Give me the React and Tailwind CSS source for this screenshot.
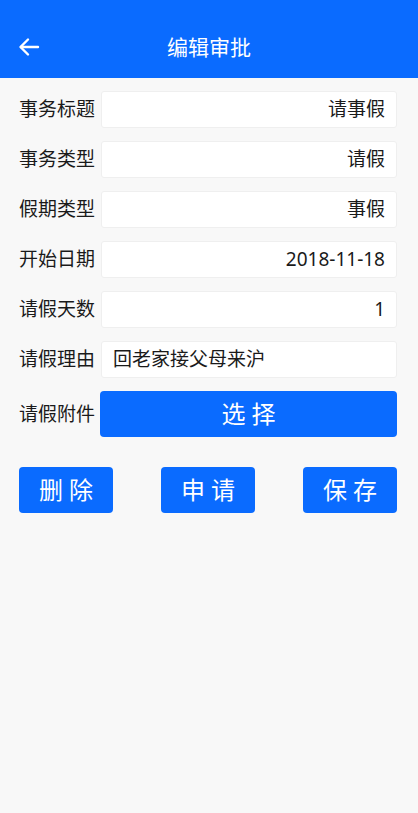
import React from "react";

const rows = [
  { label: "事务标题", value: "请事假", align: "right" },
  { label: "事务类型", value: "请假", align: "right" },
  { label: "假期类型", value: "事假", align: "right" },
  { label: "开始日期", value: "2018-11-18", align: "right" },
  { label: "请假天数", value: "1", align: "right" },
  { label: "请假理由", value: "回老家接父母来沪", align: "left" },
];

export default function App() {
  return (
    <div
      className="min-h-[813px] w-[418px] bg-[#f8f8f8] text-[#1a1a1a]"
      style={{ fontFamily: '"Noto Sans", "Noto Sans CJK SC", sans-serif' }}
    >
      <div className="relative flex h-[78px] items-center justify-center bg-[#0a6bff] pt-[16px]">
        <svg
          className="absolute left-[18px] top-[37px]"
          width="22"
          height="20"
          viewBox="0 0 22 20"
          fill="none"
          stroke="white"
          strokeWidth="2.4"
          strokeLinecap="round"
          strokeLinejoin="round"
        >
          <path d="M20 10H3" />
          <path d="M10 2.5L2.5 10L10 17.5" />
        </svg>
        <span className="text-[21px] leading-none text-white">编辑审批</span>
      </div>

      <div className="flex flex-col gap-[13px] pl-[19px] pr-[21px] pt-[13px]">
        {rows.map((r) => (
          <div key={r.label} className="flex items-center">
            <div className="w-[82px] shrink-0 text-[19px] leading-none">{r.label}</div>
            <div
              className={`flex h-[37px] flex-1 items-center rounded-[3px] border border-[#efefef] bg-white px-[11px] text-[19px] leading-none ${
                r.align === "right" ? "justify-end" : "justify-start"
              }`}
            >
              {r.value}
            </div>
          </div>
        ))}
        <div className="flex items-center">
          <div className="w-[81px] shrink-0 text-[19px] leading-none">请假附件</div>
          <button className="flex h-[46px] flex-1 items-center justify-center rounded-[4px] bg-[#0a6bff] text-[24px] leading-none text-white">
            选 择
          </button>
        </div>
      </div>

      <div className="mt-[30px] flex justify-between pl-[19px] pr-[21px]">
        {["删 除", "申 请", "保 存"].map((t) => (
          <button
            key={t}
            className="flex h-[46px] w-[94px] items-center justify-center rounded-[4px] bg-[#0a6bff] text-[24px] leading-none text-white"
          >
            {t}
          </button>
        ))}
      </div>
    </div>
  );
}
